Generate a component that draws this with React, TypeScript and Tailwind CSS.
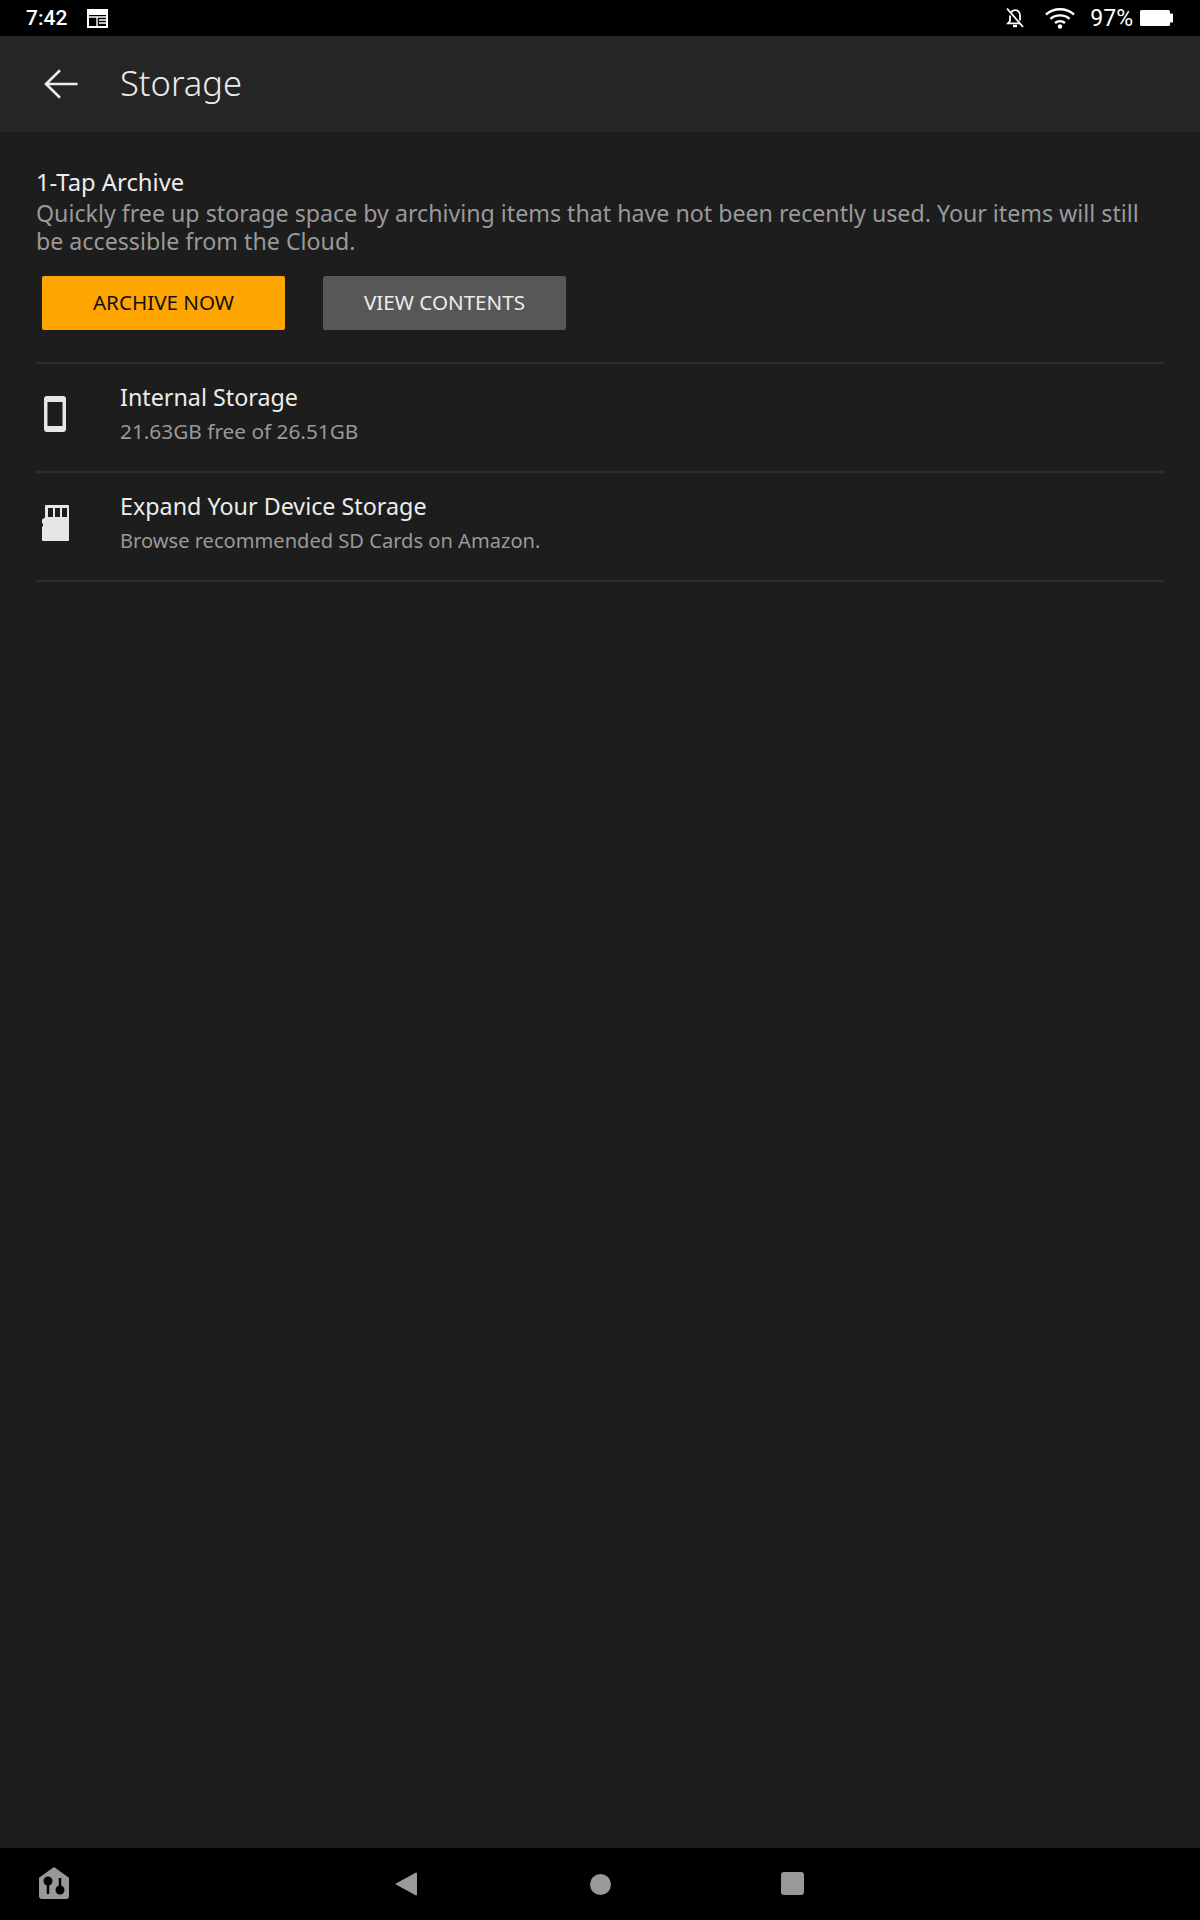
import React from 'react';

const font = { fontFamily: '"Noto Sans", sans-serif' };

const StatusBar = () => (
  <div className="h-9 bg-black flex items-center pl-[26px] pr-[27px] text-white font-['Roboto',sans-serif]">
    <span className="text-[21px] font-medium leading-none w-[61px]">7:42</span>
    <svg width="21" height="19" viewBox="0 0 21 19">
      <path d="M1 1h19v17H1z" fill="none" stroke="#fff" strokeWidth="2" />
      <path d="M1 1h19v5H1z" fill="#fff" />
      <path d="M1 8h19M10 8v9M12 11h7M12 14h7" stroke="#fff" strokeWidth="1.4" />
    </svg>
    <div className="ml-auto flex items-center">
      <svg width="20" height="22" viewBox="0 0 20 22" fill="none" stroke="#fff" strokeWidth="1.8">
        <path d="M6 5.5C6.8 4 8.2 3.2 10 3.2c3 0 5 2.2 5 5.3v5M5 8.5V14l-2 2.4h12.5" />
        <path d="M8 19h4" strokeWidth="2.4" />
        <path d="M2 1.5 18 20" />
      </svg>
      <svg width="30" height="22" viewBox="0 0 30 22" fill="none" stroke="#fff" strokeWidth="2.4" className="ml-[20px]">
        <path d="M1 7.5C8.5 0.5 21.5 0.5 29 7.5" />
        <path d="M5.5 11.8C10.5 7.2 19.5 7.2 24.5 11.8" />
        <path d="M10 16c3-2.5 7-2.5 10 0" />
        <circle cx="15" cy="19.5" r="2.2" fill="#fff" stroke="none" />
      </svg>
      <span className="text-[23px] leading-none ml-[15px]">97%</span>
      <svg width="33" height="16" viewBox="0 0 33 16" className="ml-[7px]">
        <rect x="0" y="0" width="30" height="16" rx="1.5" fill="#fff" />
        <rect x="30" y="3.5" width="3" height="9" rx="0.5" fill="#fff" />
      </svg>
    </div>
  </div>
);

const Row = ({ icon, title, sub, subClass }: { icon: React.ReactNode; title: string; sub: string; subClass: string }) => (
  <div className="h-[109px] border-b-2 border-[#2d2d2d] flex items-center">
    <div className="w-[84px] flex justify-center pr-[52px] pl-[6px] mb-[7px] shrink-0">{icon}</div>
    <div className="pb-[10px]">
      <div className="text-[23.3px] leading-[32px] text-[#ececec]">{title}</div>
      <div className={`leading-[26px] mt-[5px] text-[#999999] ${subClass}`}>{sub}</div>
    </div>
  </div>
);

export default function App() {
  return (
    <div className="w-[1200px] h-[1920px] bg-[#1d1d1d] flex flex-col overflow-hidden" style={font}>
      <StatusBar />

      <div className="h-[96px] bg-[#252525] flex items-center pl-[44px] shrink-0">
        <svg width="34" height="30" viewBox="0 0 34 30" fill="none" stroke="#ececec" strokeWidth="2.6">
          <path d="M33.5 15H2M16 1.2 2 15l14 13.8" />
        </svg>
        <span className="ml-[42px] mb-[2px] text-[34.5px] font-light text-[#ececec] leading-none">Storage</span>
      </div>

      <div className="flex-1 px-9 pt-[35px]">
        <div className="text-[23.8px] leading-[30px] text-[#ececec]">1-Tap Archive</div>
        <p className="text-[23.2px] leading-[28px] mt-[2px] text-[#999999]">
          Quickly free up storage space by archiving items that have not been recently used. Your items will still be accessible from the Cloud.
        </p>
        <div className="flex gap-[38px] pl-[6px] mt-[21px] pb-[32px] border-b-2 border-[#2d2d2d]">
          <div className="w-[243px] h-[54px] pb-[1px] rounded-[2px] bg-[#ffa500] flex items-center justify-center text-[20.6px] text-[#111111]">ARCHIVE NOW</div>
          <div className="w-[243px] h-[54px] pb-[1px] rounded-[2px] bg-[#575757] flex items-center justify-center text-[20.6px] text-[#ececec]">VIEW CONTENTS</div>
        </div>
        <Row
          title="Internal Storage"
          sub="21.63GB free of 26.51GB"
          subClass="text-[20.8px]"
          icon={
            <svg width="22" height="36" viewBox="0 0 22 36" className="shrink-0">
              <path fillRule="evenodd" d="M3 0h16a3 3 0 0 1 3 3v30a3 3 0 0 1-3 3H3a3 3 0 0 1-3-3V3a3 3 0 0 1 3-3zM3.500 6v24h15V6z" fill="#e6e6e6" />
            </svg>
          }
        />
        <Row
          title="Expand Your Device Storage"
          sub="Browse recommended SD Cards on Amazon."
          subClass="text-[20.1px] translate-y-[1px]"
          icon={
            <svg width="27" height="36" viewBox="0 0 27 36" className="shrink-0">
              <path d="M3 1a1 1 0 0 1 1-1h22a1 1 0 0 1 1 1v34a1 1 0 0 1-1 1H1a1 1 0 0 1-1-1V21.500h1v-3H0V14.500l3-2z" fill="#e6e6e6" />
              <path d="M6 3h5v9H6zM13 3h5v9h-5zM20 3h5v9h-5z" fill="#1d1d1d" />
            </svg>
          }
        />
      </div>

      <div className="h-[72px] bg-black relative shrink-0">
        <svg width="30" height="32" viewBox="0 0 30 32" className="absolute left-[39px] top-[19px]">
          <path d="M15 0 29 10a1.5 1.5 0 0 1 1 1.5V29a3 3 0 0 1-3 3H3a3 3 0 0 1-3-3V11.500A1.500 1.500 0 0 1 1 10z" fill="#999999" />
          <circle cx="9" cy="14" r="4.500" fill="#000" />
          <path d="M9 16v11" stroke="#000" strokeWidth="2.500" />
          <circle cx="21" cy="23" r="4.500" fill="#000" />
          <path d="M21 11v11" stroke="#000" strokeWidth="2.500" />
        </svg>
        <svg width="22" height="24" viewBox="0 0 22 24" className="absolute left-[395px] top-[24px]">
          <path d="M21 0.500a1 1 0 0 1 1 1v21a1 1 0 0 1-1 1L0 12z" fill="#999999" />
        </svg>
        <div className="absolute left-[590px] top-[26px] w-[21px] h-[21px] rounded-full bg-[#999999]" />
        <div className="absolute left-[781px] top-[24px] w-[23px] h-[23px] rounded-[3px] bg-[#999999]" />
      </div>
    </div>
  );
}
